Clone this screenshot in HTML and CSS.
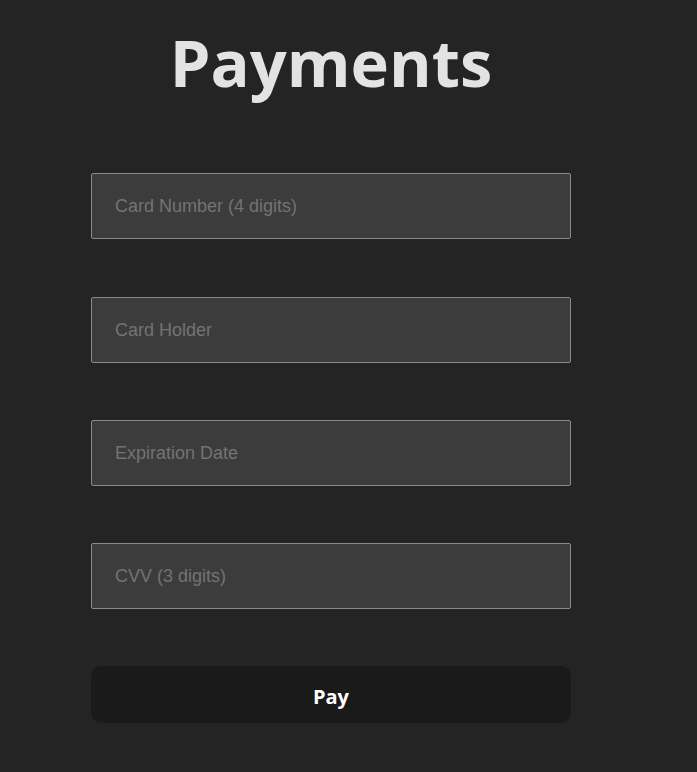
FILE: index.html
```html
<!DOCTYPE html>
<html>
<head>
<meta charset="utf-8">
<link rel="stylesheet" href="styles.css">
</head>
<body>
<main class="page">
  <h1 class="title">Payments</h1>
  <form class="form">
    <input class="field first" type="text" placeholder="Card Number (4 digits)">
    <input class="field" type="text" placeholder="Card Holder">
    <input class="field" type="text" placeholder="Expiration Date">
    <input class="field" type="text" placeholder="CVV (3 digits)">
    <button class="pay" type="button">Pay</button>
  </form>
</main>
</body>
</html>
```
FILE: styles.css
```css
html, body {
  margin: 0;
  padding: 0;
  background: #242424;
}
.page {
  width: 480px;
  margin-left: 91px;
  display: flex;
  flex-direction: column;
}
.title {
  margin: 22px 0 0 0;
  text-align: center;
  font-family: "Open Sans", sans-serif;
  font-weight: 700;
  font-size: 65px;
  line-height: 80px;
  color: #e3e3e3;
}
.form {
  margin-top: 71px;
  display: flex;
  flex-direction: column;
  gap: 57px;
}
.field {
  box-sizing: border-box;
  width: 480px;
  height: 66px;
  margin: 0;
  padding: 0 23px;
  background: #3c3c3c;
  border: 1px solid #8a8a8a;
  border-radius: 2px;
  font-family: "Liberation Sans", Arial, sans-serif;
  font-size: 18px;
  color: #e0e0e0;
  outline: none;
}
.field.first {
  margin-bottom: 1px;
}
.field::placeholder {
  color: #737373;
}
.pay {
  height: 57px;
  margin: 0;
  padding: 3px 0 0 0;
  border: none;
  border-radius: 10px;
  background: #1a1a1a;
  color: #ffffff;
  font-family: "Open Sans", sans-serif;
  font-weight: 700;
  font-size: 20px;
}
```
